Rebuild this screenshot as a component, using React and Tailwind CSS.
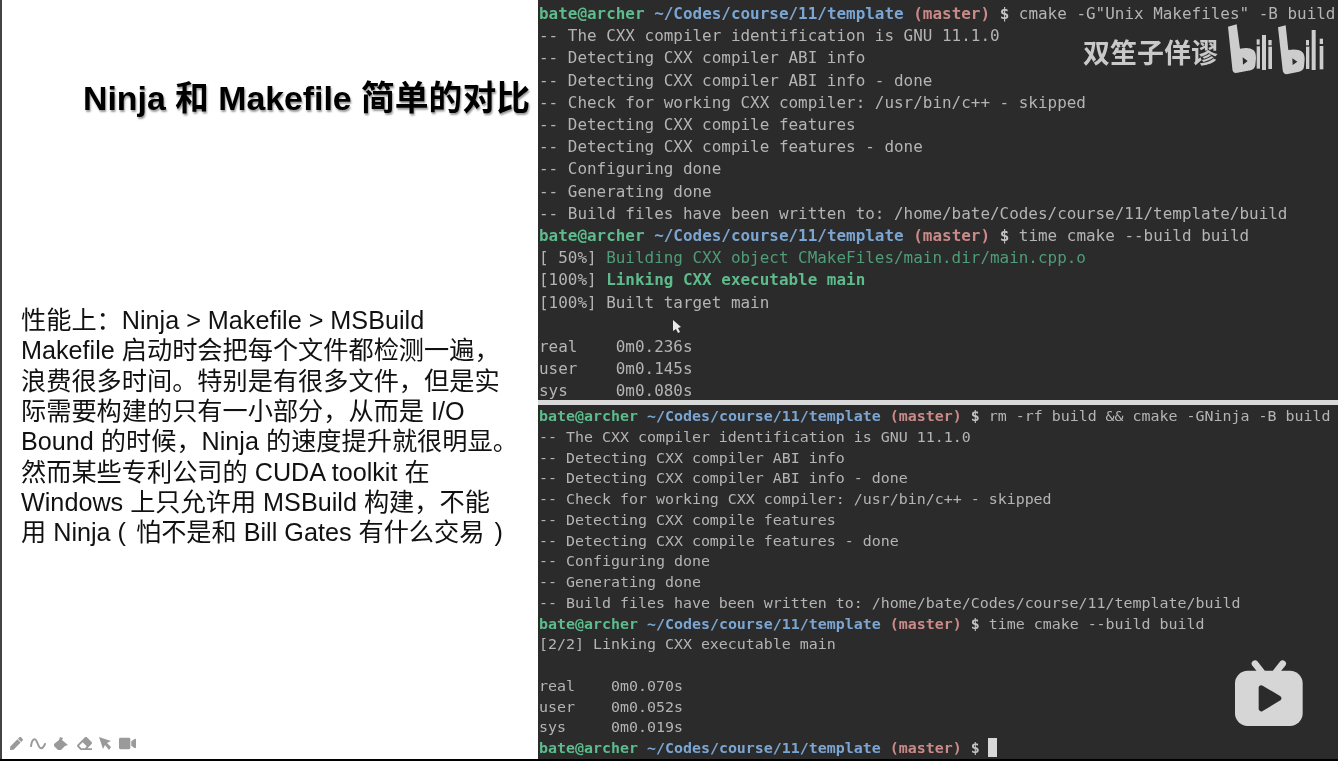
import { FaPen, FaEraser, FaVideo } from 'react-icons/fa';

function Prompt({ command, cursor }) {
  return (
    <div>
      <span className="font-bold text-[#5dbb8c]">bate@archer</span>{' '}
      <span className="font-bold text-[#7ba6d4]">~/Codes/course/11/template</span>{' '}
      <span className="font-bold text-[#c98a88]">(master)</span>
      <span className="font-bold text-[#c4c4c4]"> $ </span>
      {command}
      {cursor && <span className="inline-block w-[9px] h-[19px] -ml-[1px] align-[-4px] bg-[#d8d8d8]" />}
    </div>
  );
}

const cmakeLines = [
  '-- The CXX compiler identification is GNU 11.1.0',
  '-- Detecting CXX compiler ABI info',
  '-- Detecting CXX compiler ABI info - done',
  '-- Check for working CXX compiler: /usr/bin/c++ - skipped',
  '-- Detecting CXX compile features',
  '-- Detecting CXX compile features - done',
  '-- Configuring done',
  '-- Generating done',
  '-- Build files have been written to: /home/bate/Codes/course/11/template/build',
];

function Lines({ items }) {
  return items.map((line, i) => <div key={i}>{line || '\u00a0'}</div>);
}

function TopTerminal() {
  return (
    <div className="h-[400px] overflow-hidden bg-[#2b2b2b] pl-[1px] pt-[3px] whitespace-pre text-[15.95px] leading-[22.2px] text-[#b4b4b4] [font-family:'DejaVu_Sans_Mono',monospace]">
      <Prompt command={'cmake -G"Unix Makefiles" -B build'} />
      <Lines items={cmakeLines} />
      <Prompt command="time cmake --build build" />
      <div>[ 50%] <span className="text-[#4f9d78]">Building CXX object CMakeFiles/main.dir/main.cpp.o</span></div>
      <div>[100%] <span className="font-bold text-[#5dbb8c]">Linking CXX executable main</span></div>
      <div>[100%] Built target main</div>
      <Lines items={['', 'real    0m0.236s', 'user    0m0.145s', 'sys     0m0.080s']} />
    </div>
  );
}

function BottomTerminal() {
  return (
    <div className="flex-1 overflow-hidden bg-[#2b2b2b] pl-[1px] pt-[1px] whitespace-pre text-[14.95px] leading-[20.75px] text-[#b4b4b4] [font-family:'DejaVu_Sans_Mono',monospace]">
      <Prompt command="rm -rf build && cmake -GNinja -B build" />
      <Lines items={cmakeLines} />
      <Prompt command="time cmake --build build" />
      <div>[2/2] Linking CXX executable main</div>
      <Lines items={['', 'real    0m0.070s', 'user    0m0.052s', 'sys     0m0.019s']} />
      <Prompt cursor />
    </div>
  );
}

function WaveIcon() {
  return (
    <svg width="16" height="13" viewBox="0 0 16 13" fill="none" stroke="#9a9a9a" strokeWidth="2" strokeLinecap="round">
      <path d="M1 9C2 2 5 0 7 5s3 7 5 6 2-2 3-4" />
    </svg>
  );
}

function BucketIcon() {
  return (
    <svg width="15" height="14" viewBox="0 0 15 14" fill="#9a9a9a">
      <path d="M1 7l5-4 1-3 3 1-1 2 6 5-3 1-4 4-3 0-4-4z" />
    </svg>
  );
}

function PointerIcon() {
  return (
    <svg width="13" height="13" viewBox="0 0 13 13" fill="#9a9a9a">
      <path d="M0 0l12 4-4 2 4 4-2 3-4-5-2 4z" />
    </svg>
  );
}

function BiliLogo() {
  // coordinates follow the logo at 3x
  return (
    <svg width="118" height="55" viewBox="0 0 354 165" fill="#cdcdcd">
      <path fillRule="evenodd" d="M24 20L50 13L60 86Q88 80 100 90Q108 96 108 115L106 136Q104 148 92 151L48 159Q37 158 37 146ZM68 112L69 134L83 123Z" />
      <rect x="110" y="58" width="9" height="16" />
      <rect x="110" y="79" width="10" height="67" />
      <rect x="126" y="45" width="12" height="105" />
      <rect x="145" y="60" width="10" height="16" />
      <rect x="145" y="80" width="11" height="67" />
      <path fillRule="evenodd" d="M174 22L197 16L205 90Q234 86 246 95Q254 101 254 118L252 141Q250 152 237 155L200 163Q189 162 188 150ZM217 115L218 135L232 125Z" />
      <rect x="258" y="60" width="9" height="16" />
      <rect x="258" y="80" width="10" height="67" />
      <rect x="275" y="30" width="12" height="120" />
      <rect x="299" y="56" width="10" height="16" />
      <rect x="299" y="78" width="11" height="70" />
    </svg>
  );
}

function PlayBadge() {
  // coordinates follow the badge at 3x
  return (
    <svg width="123" height="90" viewBox="0 0 369 270">
      <path d="M135 41L155 66M218 41L198 66" stroke="#d6d6d6" strokeWidth="20" strokeLinecap="round" />
      <rect x="75" y="62" width="203" height="166" rx="38" fill="#d6d6d6" />
      <path d="M154 114L206 145L154 176Z" fill="#2b2b2b" stroke="#2b2b2b" strokeWidth="16" strokeLinejoin="round" />
    </svg>
  );
}

export default function App() {
  return (
    <div className="relative flex h-[761px] w-[1338px] overflow-hidden bg-black blur-[0.5px] [font-family:'Liberation_Sans','Noto_Sans_CJK_SC',sans-serif]">
      {/* slide side */}
      <div className="flex h-[759px] w-[538px] flex-col border-l-2 border-[#444444] bg-white">
        <h1 className="mt-[79px] pr-[8px] text-right text-[33.8px] font-bold leading-[38px] text-black [text-shadow:1px_2px_2px_rgba(0,0,0,0.4)]">
          Ninja 和 Makefile 简单的对比
        </h1>
        <div className="mt-[188px] pl-[19px] text-[25.2px] leading-[30.35px] text-[#111111]">
          <div>性能上：Ninja &gt; Makefile &gt; MSBuild</div>
          <div>Makefile 启动时会把每个文件都检测一遍，</div>
          <div>浪费很多时间。特别是有很多文件，但是实</div>
          <div>际需要构建的只有一小部分，从而是 I/O</div>
          <div>Bound 的时候，Ninja 的速度提升就很明显。</div>
          <div>然而某些专利公司的 CUDA toolkit 在</div>
          <div>Windows 上只允许用 MSBuild 构建，不能</div>
          <div>用 Ninja ( <span className="ml-[3px]">怕不是和 Bill Gates 有什么交易</span> <span className="ml-[3px]">)</span></div>
        </div>
        <div className="mt-auto mb-[7px] flex items-center gap-[7px] pl-[8px] text-[#9a9a9a]">
          <FaPen size={13} />
          <WaveIcon />
          <BucketIcon />
          <FaEraser size={15} className="ml-[2px]" />
          <PointerIcon />
          <FaVideo size={17} />
        </div>
      </div>

      {/* terminals */}
      <div className="flex h-[759px] w-[800px] flex-col">
        <TopTerminal />
        <div className="h-[5px] bg-[#d9d9d9]" />
        <BottomTerminal />
      </div>

      {/* video overlays */}
      <div className="absolute left-[1083px] top-[38px] text-[27px] leading-[32px] font-bold text-[#c9c9c9]">双笙子佯谬</div>
      <div className="absolute left-[1220px] top-[20px]"><BiliLogo /></div>
      <div className="absolute left-[1210px] top-[650px]"><PlayBadge /></div>
      <svg className="absolute left-[673px] top-[320px]" width="9" height="13" viewBox="0 0 9 13" fill="#e8e8e8">
        <path d="M0 0l8 7-3 1 2 4-2 1-2-4-3 2z" />
      </svg>
    </div>
  );
}
